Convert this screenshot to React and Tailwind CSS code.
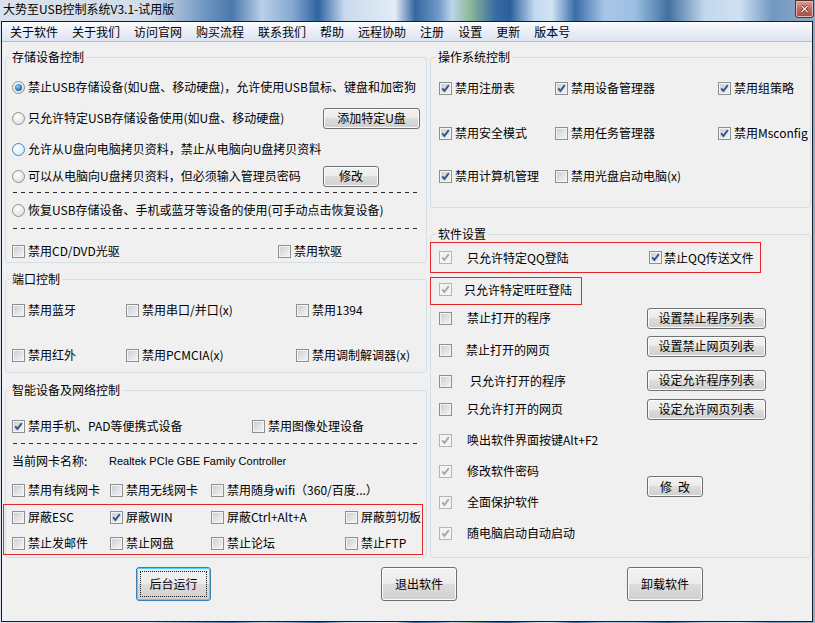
import React from "react";

function Check({ checked, disabled }) {
  const box = disabled
    ? "border-[#b5b5b5] bg-[#f4f4f4]"
    : "border-[#8e8f8f] bg-[linear-gradient(135deg,#c9ccd1,#f6f6f6)] shadow-[inset_0_0_0_1px_#f4f4f4]";
  return (
    <span className={`flex w-[13px] h-[13px] shrink-0 border ${box}`}>
      {checked && (
        <svg width="11" height="11" viewBox="0 0 11 11">
          <path
            d="M2.2 5.3 L4.4 7.9 L8.8 2.2"
            fill="none"
            stroke={disabled ? "#a8a8a8" : "#34548d"}
            strokeWidth="1.9"
          />
        </svg>
      )}
    </span>
  );
}

function Radio({ checked, hover }) {
  const ring = hover
    ? "border-[#3c8ccc] bg-[radial-gradient(circle_at_40%_35%,#ffffff,#c6e6f9)]"
    : "border-[#8e8f8f] bg-[radial-gradient(circle_at_40%_35%,#ffffff,#d6d8dc)]";
  return (
    <span className={`flex items-center justify-center w-[13px] h-[13px] shrink-0 rounded-full border ${ring}`}>
      {checked && (
        <span className="w-[7px] h-[7px] rounded-full bg-[radial-gradient(circle_at_40%_35%,#9fd6ff,#2a78b8_55%,#16487a)]" />
      )}
    </span>
  );
}

function Btn({ children, className = "" }) {
  return (
    <div
      className={`flex items-center justify-center shrink-0 h-[21px] rounded-[3px] border border-[#707070] bg-[linear-gradient(#f2f2f2,#ebebeb_50%,#dddddd_50%,#cfcfcf)] shadow-[inset_0_0_0_1px_#fbfbfb] text-[12px] leading-none ${className}`}
    >
      {children}
    </div>
  );
}

function Item({ checked, disabled, children, className = "", tm = "ml-[3px]" }) {
  return (
    <div className={`flex items-center shrink-0 ${className}`}>
      <Check checked={checked} disabled={disabled} />
      <span className={`${tm} whitespace-nowrap leading-none`}>{children}</span>
    </div>
  );
}

function RadioItem({ checked, hover, children, className = "" }) {
  return (
    <div className={`flex items-center shrink-0 ${className}`}>
      <Radio checked={checked} hover={hover} />
      <span className="ml-[3px] whitespace-nowrap leading-none">{children}</span>
    </div>
  );
}

function Dash({ className = "" }) {
  return (
    <div
      className={`ml-[1px] w-[408px] h-px shrink-0 bg-[repeating-linear-gradient(90deg,#2a2a2a_0px,#2a2a2a_4px,transparent_4px,transparent_8px)] ${className}`}
    />
  );
}

function Legend({ children, className = "ml-[4px]" }) {
  return <legend className={`${className} px-[2px] leading-[14px] text-[12px]`}>{children}</legend>;
}

const menu = ["关于软件", "关于我们", "访问官网", "购买流程", "联系我们", "帮助", "远程协助", "注册", "设置", "更新", "版本号"];

export default function App() {
  return (
    <div className="w-[815px] h-[623px] flex flex-col overflow-hidden text-[12px] text-black font-['Noto_Sans_CJK_SC','Noto_Sans',sans-serif] bg-[linear-gradient(90deg,#d9e2ec_0px,#d2dde9_150px,#6f96c1_205px,#4a78ad_232px,#b9d0e7_262px,#86a9d0_292px,#2f64a2_318px,#c9dbee_345px,#e4ecf5_395px,#3566a0_415px,#6d97c6_438px,#bcd5ec_452px,#8db996_470px,#3a6ba5_495px,#2b5f9b_510px,#c4daf0_535px,#d1e3f4_552px,#3a6ca7_575px,#a8c7e7_605px,#9cbfe3_635px,#41719f_668px,#c3d8ed_705px,#cfe0f1_740px,#7298c2_772px,#91abc7_815px)]">
      {/* title bar */}
      <div className="h-[21px] shrink-0 flex items-start justify-between">
        <div className="pl-[3px] pt-[2px] leading-[14px] text-[12px] text-black">大势至USB控制系统V3.1-试用版</div>
        <div className="mr-[1px] w-[19px] h-[18px] flex items-center justify-center border border-[#4e3430] rounded-b-[3px] bg-[linear-gradient(#dca195,#c76e62_45%,#a94b41)] shadow-[inset_0_0_0_1px_#e9b9b0]">
          <svg width="9" height="8" viewBox="0 0 9 8">
            <path d="M1.5 1 L7.5 7 M7.5 1 L1.5 7" stroke="#5a2b25" strokeWidth="2.6" />
            <path d="M1.5 1 L7.5 7 M7.5 1 L1.5 7" stroke="#f4ecea" strokeWidth="1.4" />
          </svg>
        </div>
      </div>

      {/* window client */}
      <div className="flex-1 ml-[1px] mr-[2px] mb-[1px] border border-[#1c1c1c] bg-[#f0f0f0] flex flex-col">
        {/* menu */}
        <div className="h-[20px] shrink-0 flex items-center pl-[1px] border-b border-[#b7bdcc] bg-[linear-gradient(#fbfcfe,#e9edf7_55%,#dde3f0)]">
          {menu.map((m) => (
            <span key={m} className="px-[7px] leading-none whitespace-nowrap">{m}</span>
          ))}
        </div>

        {/* body */}
        <div className="flex gap-[3px] pl-[3px] pt-[8px]">
          {/* left column */}
          <div className="w-[422px] flex flex-col">
            <fieldset className="h-[213px] border border-[#d5dfe5] rounded-[3px]">
              <Legend>存储设备控制</Legend>
              <div className="flex flex-col pl-[6px]">
                <div className="mt-[12px] h-[22px] flex items-center">
                  <RadioItem checked>禁止USB存储设备(如U盘、移动硬盘)，允许使用USB鼠标、键盘和加密狗</RadioItem>
                </div>
                <div className="mt-[9px] h-[22px] flex items-center">
                  <RadioItem className="w-[311px]">只允许特定USB存储设备使用(如U盘、移动硬盘)</RadioItem>
                  <Btn className="w-[97px]">添加特定U盘</Btn>
                </div>
                <div className="mt-[9px] h-[22px] flex items-center">
                  <RadioItem hover>允许从U盘向电脑拷贝资料，禁止从电脑向U盘拷贝资料</RadioItem>
                </div>
                <div className="mt-[5px] h-[22px] flex items-center">
                  <RadioItem className="w-[311px]">可以从电脑向U盘拷贝资料，但必须输入管理员密码</RadioItem>
                  <Btn className="w-[56px]">修改</Btn>
                </div>
                <Dash className="mt-[5px]" />
                <div className="mt-[6px] h-[22px] flex items-center">
                  <RadioItem>恢复USB存储设备、手机或蓝牙等设备的使用(可手动点击恢复设备)</RadioItem>
                </div>
                <Dash className="mt-[7px]" />
                <div className="mt-[12px] h-[20px] flex items-center">
                  <Item className="w-[266px]">禁用CD/DVD光驱</Item>
                  <Item>禁用软驱</Item>
                </div>
              </div>
            </fieldset>

            <fieldset className="mt-[9px] h-[101px] border border-[#d5dfe5] rounded-[3px]">
              <Legend>端口控制</Legend>
              <div className="flex flex-col pl-[6px]">
                <div className="mt-[13px] h-[22px] flex items-center">
                  <Item className="w-[114px]">禁用蓝牙</Item>
                  <Item className="w-[170px]">禁用串口/并口(x)</Item>
                  <Item>禁用1394</Item>
                </div>
                <div className="mt-[23px] h-[22px] flex items-center">
                  <Item className="w-[114px]">禁用红外</Item>
                  <Item className="w-[170px]">禁用PCMCIA(x)</Item>
                  <Item>禁用调制解调器(x)</Item>
                </div>
              </div>
            </fieldset>

            <fieldset className="mt-[10px] h-[175px] border border-[#d5dfe5] rounded-[3px]">
              <Legend>智能设备及网络控制</Legend>
              <div className="flex flex-col pl-[6px]">
                <div className="mt-[18px] h-[22px] flex items-center">
                  <Item checked className="w-[240px]">禁用手机、PAD等便携式设备</Item>
                  <Item>禁用图像处理设备</Item>
                </div>
                <Dash className="mt-[6px]" />
                <div className="mt-[6px] h-[22px] flex items-center">
                  <span className="w-[97px] leading-none whitespace-nowrap">当前网卡名称:</span>
                  <span className="leading-none whitespace-nowrap text-[11px] font-['Liberation_Sans',sans-serif]">Realtek PCIe GBE Family Controller</span>
                </div>
                <div className="mt-[7px] h-[22px] flex items-center">
                  <Item className="w-[98px]">禁用有线网卡</Item>
                  <Item className="w-[101px]">禁用无线网卡</Item>
                  <Item>禁用随身wifi（360/百度...）</Item>
                </div>
                <div className="mt-[3px] -ml-[9px] w-[420px] h-[51px] border border-[#e3262a] flex flex-col pl-[8px] pt-[2px]">
                  <div className="h-[20px] flex items-center">
                    <Item className="w-[98px]">屏蔽ESC</Item>
                    <Item checked className="w-[101px]">屏蔽WIN</Item>
                    <Item className="w-[134px]">屏蔽Ctrl+Alt+A</Item>
                    <Item>屏蔽剪切板</Item>
                  </div>
                  <div className="mt-[6px] h-[20px] flex items-center">
                    <Item className="w-[98px]">禁止发邮件</Item>
                    <Item className="w-[101px]">禁止网盘</Item>
                    <Item className="w-[134px]">禁止论坛</Item>
                    <Item>禁止FTP</Item>
                  </div>
                </div>
              </div>
            </fieldset>
          </div>

          {/* right column */}
          <div className="w-[381px] flex flex-col">
            <fieldset className="h-[158px] border border-[#d5dfe5] rounded-[3px]">
              <Legend className="ml-[5px]">操作系统控制</Legend>
              <div className="flex flex-col pl-[8px]">
                <div className="mt-[13px] h-[22px] flex items-center">
                  <Item checked className="w-[116px]">禁用注册表</Item>
                  <Item checked className="w-[163px]">禁用设备管理器</Item>
                  <Item checked>禁用组策略</Item>
                </div>
                <div className="mt-[23px] h-[22px] flex items-center">
                  <Item checked className="w-[116px]">禁用安全模式</Item>
                  <Item className="w-[163px]">禁用任务管理器</Item>
                  <Item checked>禁用Msconfig</Item>
                </div>
                <div className="mt-[21px] h-[22px] flex items-center">
                  <Item checked className="w-[116px]">禁用计算机管理</Item>
                  <Item>禁用光盘启动电脑(x)</Item>
                </div>
              </div>
            </fieldset>

            <fieldset className="mt-[19px] h-[331px] border border-[#d5dfe5] rounded-[3px]">
              <Legend className="ml-[5px]">软件设置</Legend>
              <div className="flex flex-col">
                <div className="mt-[1px] -ml-[1px] w-[331px] h-[31px] border border-[#e3262a] flex items-center pl-[8px]">
                  <Item checked disabled tm="ml-[15px]" className="w-[210px]">只允许特定QQ登陆</Item>
                  <Item checked tm="ml-[2px]">禁止QQ传送文件</Item>
                </div>
                <div className="mt-[4px] -ml-[1px] w-[152px] h-[28px] border border-[#e3262a] flex items-center pl-[8px] pb-[3px]">
                  <Item checked disabled tm="ml-[12px]">只允许特定旺旺登陆</Item>
                </div>
                <div className="flex flex-col pl-[8px]">
                  <div className="mt-[2px] h-[22px] flex items-center">
                    <Item tm="ml-[15px]" className="w-[208px]">禁止打开的程序</Item>
                    <Btn className="w-[119px]">设置禁止程序列表</Btn>
                  </div>
                  <div className="mt-[10px] h-[22px] flex items-center">
                    <Item tm="ml-[14px]" className="w-[208px]">禁止打开的网页</Item>
                    <Btn className="w-[119px] mb-[8px]">设置禁止网页列表</Btn>
                  </div>
                  <div className="mt-[9px] h-[22px] flex items-center">
                    <Item tm="ml-[18px]" className="w-[208px]">只允许打开的程序</Item>
                    <Btn className="w-[119px] mb-[2px]">设定允许程序列表</Btn>
                  </div>
                  <div className="mt-[6px] h-[22px] flex items-center">
                    <Item tm="ml-[15px]" className="w-[208px]">只允许打开的网页</Item>
                    <Btn className="w-[119px]">设定允许网页列表</Btn>
                  </div>
                  <div className="mt-[9px] h-[22px] flex items-center">
                    <Item checked disabled tm="ml-[15px]">唤出软件界面按键Alt+F2</Item>
                  </div>
                  <div className="mt-[9px] flex items-center">
                    <div className="w-[208px] flex flex-col">
                      <div className="h-[22px] flex items-center">
                        <Item checked disabled tm="ml-[15px]">修改软件密码</Item>
                      </div>
                      <div className="mt-[9px] h-[22px] flex items-center">
                        <Item checked disabled tm="ml-[15px]">全面保护软件</Item>
                      </div>
                    </div>
                    <Btn className="w-[56px] tracking-[6px] pl-[6px]">修改</Btn>
                  </div>
                  <div className="mt-[9px] h-[22px] flex items-center">
                    <Item checked disabled tm="ml-[15px]">随电脑启动自动启动</Item>
                  </div>
                </div>
              </div>
            </fieldset>
          </div>
        </div>

        {/* bottom buttons */}
        <div className="mt-[9px] flex pl-[134px] gap-[170px]">
          <div className="w-[75px] h-[34px] flex p-[3px] rounded-[3px] border border-[#3c7fb1] bg-[linear-gradient(#f2f2f2,#ebebeb_50%,#dddddd_50%,#cfcfcf)] shadow-[inset_0_0_0_1px_#48d5f9]">
            <div className="flex-1 flex items-center justify-center border border-dotted border-[#1a1a1a] leading-none">后台运行</div>
          </div>
          <Btn className="w-[76px] h-[34px]">退出软件</Btn>
          <Btn className="w-[76px] h-[34px]">卸载软件</Btn>
        </div>
      </div>
    </div>
  );
}
